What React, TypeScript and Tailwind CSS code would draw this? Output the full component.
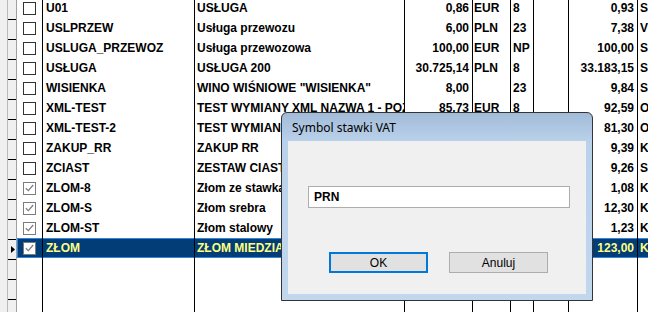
import React from 'react';

type Row = {
  code: string;
  name: string;
  value: string;
  cur: string;
  vat: string;
  gross: string;
  t: string;
  checked?: boolean;
  selected?: boolean;
};

const ROWS: Row[] = [
  { code: 'U01', name: 'USŁUGA', value: '0,86', cur: 'EUR', vat: '8', gross: '0,93', t: 'S' },
  { code: 'USLPRZEW', name: 'Usługa przewozu', value: '6,00', cur: 'PLN', vat: '23', gross: '7,38', t: 'V' },
  { code: 'USLUGA_PRZEWOZ', name: 'Usługa przewozowa', value: '100,00', cur: 'EUR', vat: 'NP', gross: '100,00', t: 'S' },
  { code: 'USŁUGA', name: 'USŁUGA 200', value: '30.725,14', cur: 'PLN', vat: '8', gross: '33.183,15', t: 'S' },
  { code: 'WISIENKA', name: 'WINO WIŚNIOWE "WISIENKA"', value: '8,00', cur: '', vat: '23', gross: '9,84', t: 'S' },
  { code: 'XML-TEST', name: 'TEST WYMIANY XML NAZWA 1 - POZYCJA', value: '85,73', cur: 'EUR', vat: '8', gross: '92,59', t: 'O' },
  { code: 'XML-TEST-2', name: 'TEST WYMIANY XML NAZWA 2', value: '75,28', cur: 'EUR', vat: '8', gross: '81,30', t: 'O' },
  { code: 'ZAKUP_RR', name: 'ZAKUP RR', value: '8,69', cur: 'PLN', vat: '8', gross: '9,39', t: 'K' },
  { code: 'ZCIAST', name: 'ZESTAW CIASTEK', value: '8,57', cur: 'PLN', vat: '8', gross: '9,26', t: 'S' },
  { code: 'ZLOM-8', name: 'Złom ze stawką 8%', value: '1,00', cur: 'PLN', vat: '8', gross: '1,08', t: 'K', checked: true },
  { code: 'ZLOM-S', name: 'Złom srebra', value: '10,00', cur: 'PLN', vat: '23', gross: '12,30', t: 'K', checked: true },
  { code: 'ZLOM-ST', name: 'Złom stalowy', value: '1,00', cur: 'PLN', vat: '23', gross: '1,23', t: 'K', checked: true },
  { code: 'ZŁOM', name: 'ZŁOM MIEDZIANY', value: '100,00', cur: 'PLN', vat: '23', gross: '123,00', t: 'K', checked: true, selected: true },
];

const EMPTY: Row = { code: '', name: '', value: '', cur: '', vat: '', gross: '', t: '' };

function CheckBox({ checked, show }: { checked?: boolean; show: boolean }) {
  if (!show) return null;
  return (
    <div
      className={`ml-[6px] flex h-[13px] w-[13px] items-center justify-center border bg-white ${
        checked ? 'border-[#7c7c7c]' : 'border-[#333333]'
      }`}
    >
      {checked && (
        <svg width="9" height="8" viewBox="0 0 9 8">
          <path d="M0.8 4.2 L3.3 6.6 L8.2 1" fill="none" stroke="#7c7c7c" strokeWidth="1.2" />
        </svg>
      )}
    </div>
  );
}

function GridRow({ row, filled }: { row: Row; filled: boolean }) {
  const sel = row.selected;
  const cell = `h-[20px] shrink-0 overflow-hidden whitespace-nowrap border-r border-black text-[12px] font-bold leading-[20px] ${
    sel ? 'bg-[#033d78] text-[#ffff80] shadow-[inset_0_1px_0_#2f86dc,inset_0_-1px_0_#2f86dc]' : 'text-black'
  }`;
  return (
    <div className="flex h-[20px]">
      <div className="w-[8px] shrink-0 border-r border-[#b9b9b9] bg-[#f0f0f0]" />
      <div className="flex w-[9px] shrink-0 flex-col border-r border-[#a0a0a0] bg-[#f0f0f0]">
        <div className="mt-px h-px bg-black" />
        <div className="flex flex-1 items-center justify-end pr-[1px]">
          {sel && (
            <svg width="4" height="7" viewBox="0 0 4 7">
              <path d="M0 0 L4 3.5 L0 7 Z" fill="#000" />
            </svg>
          )}
        </div>
      </div>
      <div className={`${cell} flex w-[26px] items-center ${sel ? 'shadow-[inset_1px_0_0_#2f86dc,inset_0_1px_0_#2f86dc,inset_0_-1px_0_#2f86dc]' : ''}`}>
        <CheckBox checked={row.checked} show={filled} />
      </div>
      <div className={`${cell} w-[152px] pl-[3px]`}>{row.code}</div>
      <div className={`${cell} w-[210px] pl-[2px]`}>{row.name}</div>
      <div className={`${cell} w-[68px] pr-[3px] text-right`}>{row.value}</div>
      <div className={`${cell} w-[38px] pl-[1px]`}>{row.cur}</div>
      <div className={`${cell} w-[23px] pl-[2px]`}>{row.vat}</div>
      <div className={`${cell} w-[35px]`} />
      <div className={`${cell} w-[69px] pr-[3px] text-right`}>{row.gross}</div>
      <div className={`${cell} w-[40px] pl-[2px]`}>{row.t}</div>
    </div>
  );
}

function VatDialog() {
  return (
    <div className="absolute left-[281px] top-[112px] flex h-[189px] w-[312px] flex-col rounded-t-[6px] border border-[#343434] bg-[linear-gradient(180deg,#a2bbd8_0px,#b9d1ea_28px,#c1d7ee_100%)]">
      <div
        className="flex h-[28px] items-center pl-[10px] pt-[2px] text-[12px] text-black"
        style={{ fontFamily: '"Noto Sans", "Open Sans", sans-serif' }}
      >
        Symbol stawki VAT
      </div>
      <div className="mx-[6px] mb-[6px] flex flex-1 flex-col bg-[#f0f0f0] px-[20px] pt-[45px]">
        <div className="flex h-[22px] w-[262px] items-center border border-[#adadad] bg-white pl-[5px] text-[12px] font-bold text-black">
          PRN
        </div>
        <div className="mt-[44px] flex gap-[21px] pl-[21px] text-[12px] text-black">
          <div className="flex h-[21px] w-[99px] items-center justify-center border-2 border-[#0078d7] bg-[#e1e1e1]">OK</div>
          <div className="flex h-[21px] w-[99px] items-center justify-center border border-[#adadad] bg-[#e1e1e1]">Anuluj</div>
        </div>
      </div>
    </div>
  );
}

export default function App() {
  return (
    <div
      className="relative h-[312px] w-[648px] overflow-hidden bg-white"
      style={{ fontFamily: '"Liberation Sans", Arial, sans-serif' }}
    >
      <div className="mt-[-2px]">
        {ROWS.map((r) => (
          <GridRow key={r.code} row={r} filled />
        ))}
        {[0, 1, 2, 3].map((i) => (
          <GridRow key={'e' + i} row={EMPTY} filled={false} />
        ))}
      </div>
      <VatDialog />
    </div>
  );
}
